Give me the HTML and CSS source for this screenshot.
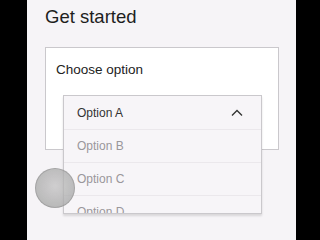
FILE: index.html
```html
<!DOCTYPE html>
<html lang="en">
<head>
    <meta charset="UTF-8">
    <meta name="viewport" content="width=device-width, initial-scale=1">
    <title>Get started</title>
    <link rel="stylesheet" href="styles.css">
</head>
<body>
    <div class="screen">
        <h1>Get started</h1>
        <div class="card">
            <div class="card-label">Choose option</div>
            <div class="dropdown">
                <div class="option selected">
                    <span>Option A</span>
                    <svg class="chevron" width="12" height="8" viewBox="0 0 12 8">
                        <path d="M1 6.5 L6 1.5 L11 6.5" fill="none" stroke="#333" stroke-width="1.3"/>
                    </svg>
                </div>
                <div class="option">Option B</div>
                <div class="option">Option C</div>
                <div class="option">Option D</div>
            </div>
        </div>
        <div class="touch"></div>
    </div>
</body>
</html>
```

FILE: styles.css
```css
body {
    margin: 0;
    background-color: #000;
    font-family: 'Liberation Sans', Arial, sans-serif;
    color: #222;
}
.screen {
    position: relative;
    width: 269px;
    height: 240px;
    margin-left: 27px;
    padding: 0 17px 0 18px;
    box-sizing: border-box;
    background-color: #f6f4f7;
    overflow: hidden;
}
h1 {
    margin: 0;
    padding-top: 7px;
    font-size: 18.5px;
    font-weight: normal;
    line-height: 20px;
    color: #1e1e1e;
}
.card {
    position: relative;
    margin-top: 20px;
    height: 103px;
    box-sizing: border-box;
    background-color: #fff;
    border: 1px solid #cac8cc;
}
.card-label {
    padding: 14px 0 0 10px;
    font-size: 13.5px;
    line-height: 16px;
    color: #222;
}
.dropdown {
    position: absolute;
    left: 17px;
    top: 47px;
    width: 199px;
    height: 119px;
    box-sizing: border-box;
    border: 1px solid #cac8cc;
    background-color: #f7f5f8;
    box-shadow: 0 2px 2px rgba(0, 0, 0, 0.12);
    overflow: hidden;
}
.option {
    display: flex;
    align-items: center;
    justify-content: space-between;
    height: 32px;
    padding: 0 18px 0 13px;
    border-top: 1px solid #ebe8ec;
    font-size: 12px;
    color: #9a979b;
}
.option.selected {
    height: 33px;
    border-top: none;
    color: #333;
}
.chevron {
    display: block;
}
.touch {
    position: absolute;
    left: 8px;
    top: 168px;
    width: 40px;
    height: 40px;
    box-sizing: border-box;
    border-radius: 50%;
    border: 1px solid rgba(140, 140, 140, 0.5);
    background: radial-gradient(circle at 50% 45%, rgba(190, 190, 190, 0.7), rgba(160, 160, 160, 0.8));
}
```
